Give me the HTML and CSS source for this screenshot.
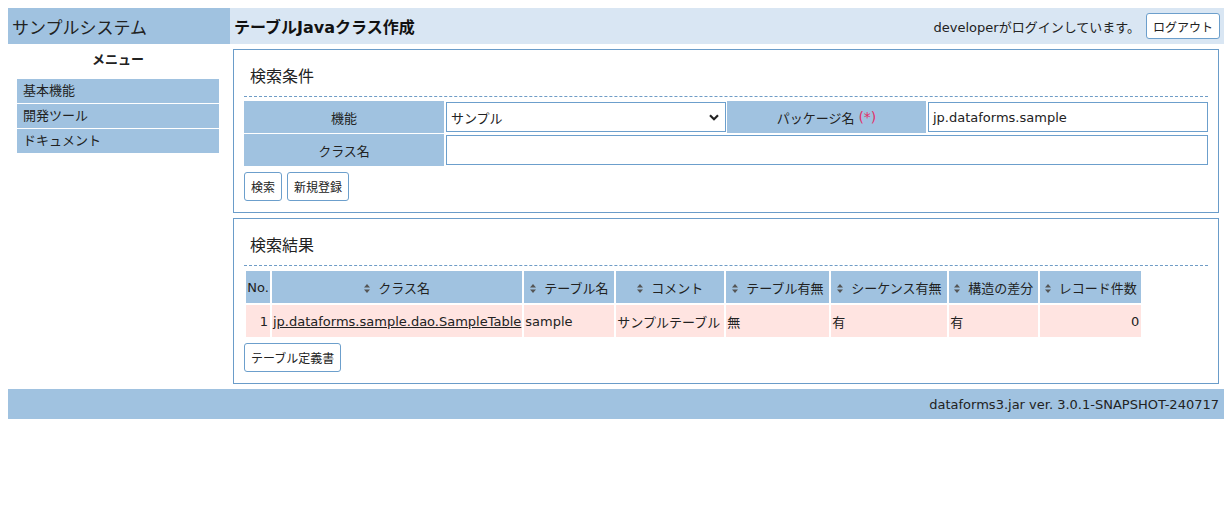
FILE: index.html
```html
<!DOCTYPE html>
<html lang="ja">
<head>
<meta charset="utf-8">
<title>テーブルJavaクラス作成</title>
<link rel="stylesheet" href="styles.css">
</head>
<body>
<div class="layout">
  <div class="sys-name">サンプルシステム</div>
  <div class="page-head">
    <h1 class="page-title">テーブルJavaクラス作成</h1>
    <div class="login-info">
      <span>developerがログインしています。</span>
      <button class="btn" type="button">ログアウト</button>
    </div>
  </div>

  <nav class="sidebar">
    <div class="menu-title">メニュー</div>
    <ul class="menu">
      <li class="menu-item">基本機能</li>
      <li class="menu-item">開発ツール</li>
      <li class="menu-item">ドキュメント</li>
    </ul>
  </nav>

  <main class="main">
    <section class="box">
      <h2 class="box-title">検索条件</h2>
      <div class="cond-grid">
        <div class="cond-label">機能</div>
        <div class="cond-value">
          <div class="select"><span>サンプル</span>
            <svg class="chev" width="10" height="7" viewBox="0 0 10 7"><path d="M1 1.2 L5 5.2 L9 1.2" fill="none" stroke="#222" stroke-width="2.2"/></svg>
          </div>
        </div>
        <div class="cond-label">パッケージ名 <span class="req">(*)</span></div>
        <div class="cond-value"><div class="input">jp.dataforms.sample</div></div>
        <div class="cond-label">クラス名</div>
        <div class="cond-value span3"><div class="input"></div></div>
      </div>
      <div class="btn-row">
        <button class="btn" type="button">検索</button>
        <button class="btn" type="button">新規登録</button>
      </div>
    </section>

    <section class="box">
      <h2 class="box-title">検索結果</h2>
      <table class="result">
        <thead>
          <tr>
            <th class="c-no">No.</th>
            <th class="c-cls"><svg class="sort" width="6" height="9" viewBox="0 0 6 9"><path d="M3 0 L6 3.5 H0 Z M3 9 L6 5.5 H0 Z" fill="#555"/></svg>クラス名</th>
            <th class="c-tbl"><svg class="sort" width="6" height="9" viewBox="0 0 6 9"><path d="M3 0 L6 3.5 H0 Z M3 9 L6 5.5 H0 Z" fill="#555"/></svg>テーブル名</th>
            <th class="c-cmt"><svg class="sort" width="6" height="9" viewBox="0 0 6 9"><path d="M3 0 L6 3.5 H0 Z M3 9 L6 5.5 H0 Z" fill="#555"/></svg>コメント</th>
            <th class="c-ex"><svg class="sort" width="6" height="9" viewBox="0 0 6 9"><path d="M3 0 L6 3.5 H0 Z M3 9 L6 5.5 H0 Z" fill="#555"/></svg>テーブル有無</th>
            <th class="c-seq"><svg class="sort" width="6" height="9" viewBox="0 0 6 9"><path d="M3 0 L6 3.5 H0 Z M3 9 L6 5.5 H0 Z" fill="#555"/></svg>シーケンス有無</th>
            <th class="c-diff"><svg class="sort" width="6" height="9" viewBox="0 0 6 9"><path d="M3 0 L6 3.5 H0 Z M3 9 L6 5.5 H0 Z" fill="#555"/></svg>構造の差分</th>
            <th class="c-cnt"><svg class="sort" width="6" height="9" viewBox="0 0 6 9"><path d="M3 0 L6 3.5 H0 Z M3 9 L6 5.5 H0 Z" fill="#555"/></svg>レコード件数</th>
          </tr>
        </thead>
        <tbody>
          <tr>
            <td class="num">1</td>
            <td><a class="link" href="#">jp.dataforms.sample.dao.SampleTable</a></td>
            <td>sample</td>
            <td>サンプルテーブル</td>
            <td>無</td>
            <td>有</td>
            <td>有</td>
            <td class="num">0</td>
          </tr>
        </tbody>
      </table>
      <div class="btn-row">
        <button class="btn" type="button">テーブル定義書</button>
      </div>
    </section>
  </main>

  <footer class="footer">dataforms3.jar ver. 3.0.1-SNAPSHOT-240717</footer>
</div>
</body>
</html>
```

FILE: styles.css
```css
html, body {
  margin: 0;
  padding: 0;
  background: #fff;
}
body {
  margin: 8px;
  font-family: "DejaVu Sans", "Noto Sans CJK JP", sans-serif;
  font-size: 13px;
  color: #222;
}
.layout {
  display: grid;
  grid-template-columns: 222px 1fr;
  width: 1216px;
}
.sys-name {
  background: #a0c2e0;
  height: 36px;
  display: flex;
  align-items: center;
  padding-left: 4px;
  font-size: 17px;
  color: #222;
}
.page-head {
  background: #d9e6f3;
  height: 36px;
  display: flex;
  align-items: center;
  justify-content: space-between;
  padding: 0 4px 0 4px;
}
.page-title {
  margin: 0;
  font-size: 16px;
  font-weight: bold;
  color: #111;
}
.login-info {
  display: flex;
  align-items: center;
  gap: 6px;
  font-size: 13px;
}
.btn {
  font-family: "DejaVu Sans", "Noto Sans CJK JP", sans-serif;
  font-size: 12px;
  color: #222;
  background: #fff;
  border: 1px solid #6c9fcc;
  border-radius: 3px;
  height: 29px;
  padding: 0 6px;
  cursor: pointer;
}
.login-info .btn {
  height: 26px;
  padding: 0 6px;
}
.sidebar {
  padding: 0 11px 0 9px;
}
.menu-title {
  text-align: center;
  font-weight: bold;
  font-size: 13px;
  line-height: 20px;
  padding: 6px 0 9px;
}
.menu {
  list-style: none;
  margin: 0;
  padding: 0;
}
.menu-item {
  background: #a0c2e0;
  height: 24px;
  line-height: 24px;
  padding-left: 6px;
  margin-bottom: 1px;
  font-size: 13px;
}
.main {
  padding: 5px 5px 5px 3px;
  display: flex;
  flex-direction: column;
  gap: 5px;
}
.box {
  border: 1px solid #6a9cc9;
  padding: 0 10px 11px;
}
.box-title {
  margin: 0;
  font-size: 16px;
  font-weight: normal;
  line-height: 22px;
  padding: 16px 6px 8px;
  border-bottom: 1px dashed #6f9cc6;
}
.cond-grid {
  display: grid;
  grid-template-columns: 200px 281px 199px 1fr;
  column-gap: 1px;
  row-gap: 1px;
  margin-top: 4px;
}
.cond-label {
  background: #a0c2e0;
  height: 32px;
  display: flex;
  align-items: center;
  justify-content: center;
  font-size: 13px;
}
.req {
  color: #e0306a;
  margin-left: 4px;
  font-size: 14px;
}
.cond-value {
  display: flex;
  align-items: center;
  padding-left: 1px;
}
.span3 {
  grid-column: 2 / 5;
}
.select, .input {
  box-sizing: border-box;
  width: 100%;
  height: 30px;
  border: 1px solid #6c9fcc;
  background: #fff;
  display: flex;
  align-items: center;
  padding: 0 4px;
  font-size: 13px;
}
.select {
  justify-content: space-between;
}
.chev {
  margin-right: 2px;
}
.btn-row {
  display: flex;
  gap: 5px;
  margin-top: 6px;
}
.result {
  border-collapse: separate;
  border-spacing: 2px;
  margin: 3px 0 0 0;
}
.result th {
  background: #a0c2e0;
  font-weight: normal;
  height: 32px;
  padding: 0;
  text-align: center;
  white-space: nowrap;
  font-size: 13px;
}
.result td {
  background: #ffe4e1;
  height: 32px;
  padding: 0 1px;
  white-space: nowrap;
  font-size: 13px;
}
.result td.num {
  text-align: right;
  padding-right: 2px;
}
.sort {
  margin-right: 8px;
  vertical-align: 0;
}
.c-no { width: 24px; }
.c-cls { width: 250px; }
.c-tbl { width: 90px; }
.c-cmt { width: 108px; }
.c-ex { width: 103px; }
.c-seq { width: 116px; }
.c-diff { width: 89px; }
.c-cnt { width: 101px; }
.link {
  color: #222;
  text-decoration: underline;
}
.result + .btn-row {
  margin-top: 4px;
}
.footer {
  grid-column: 1 / 3;
  background: #a0c2e0;
  height: 30px;
  display: flex;
  align-items: center;
  justify-content: flex-end;
  padding-right: 5px;
  font-size: 13px;
}
```
